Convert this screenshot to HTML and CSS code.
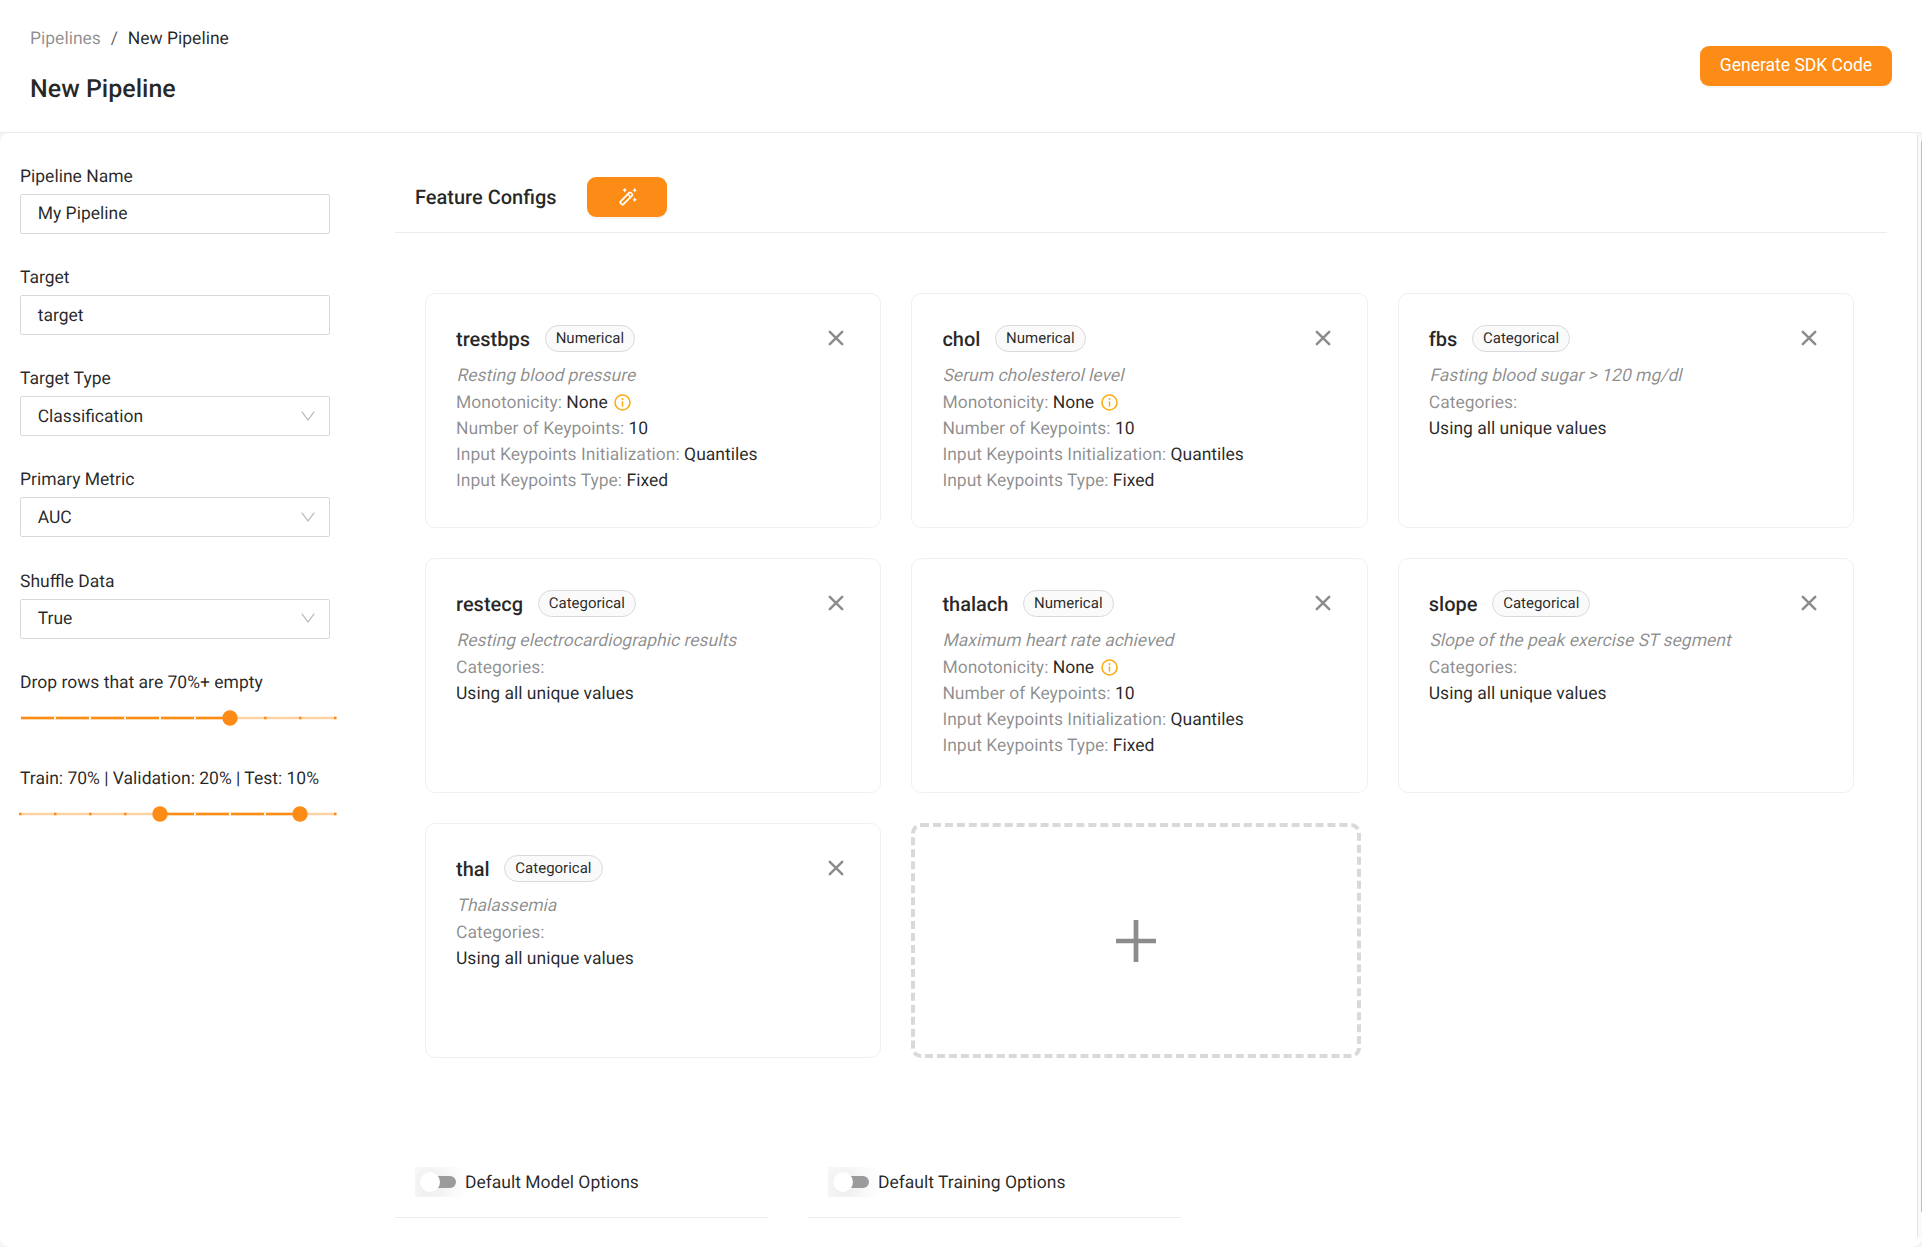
FILE: index.html
```html
<!DOCTYPE html>
<html lang="en">
<head>
<meta charset="utf-8">
<title>New Pipeline</title>
<link rel="stylesheet" href="styles.css">
</head>
<body>
<svg class="defs" width="0" height="0" aria-hidden="true">
  <symbol id="i-close" viewBox="0 0 16 16"><path d="M1.8 1.8 14.200 14.200M14.200 1.800 1.800 14.200" fill="none" stroke="currentColor" stroke-width="2.500" stroke-linecap="round"/></symbol>
  <symbol id="i-down" viewBox="0 0 14 10"><path d="M.7.6 7 9 13.3.6" fill="none" stroke="currentColor" stroke-width="1.300"/></symbol>
  <symbol id="i-info" viewBox="0 0 17 17"><circle cx="8.5" cy="8.5" r="7.500" fill="none" stroke="currentColor" stroke-width="1.600"/><path d="M8.5 7.3v5.4" stroke="currentColor" stroke-width="1.500"/><circle cx="8.5" cy="5.1" r="1" fill="currentColor"/></symbol>
</svg>

<header class="page-header">
  <div>
    <nav class="crumbs"><a class="crumb-link">Pipelines</a><span class="crumb-sep">/</span><span>New Pipeline</span></nav>
    <h1 class="page-title">New Pipeline</h1>
  </div>
  <button class="btn btn-code">Generate SDK Code</button>
</header>

<div class="backdrop">
<div class="body-panel">
  <aside class="sidebar">
    <div class="field"><label class="label">Pipeline Name</label><div class="control">My Pipeline</div></div>
    <div class="field"><label class="label">Target</label><div class="control">target</div></div>
    <div class="field"><label class="label">Target Type</label><div class="control">Classification<svg class="chev"><use href="#i-down"/></svg></div></div>
    <div class="field"><label class="label">Primary Metric</label><div class="control">AUC<svg class="chev"><use href="#i-down"/></svg></div></div>
    <div class="field"><label class="label">Shuffle Data</label><div class="control">True<svg class="chev"><use href="#i-down"/></svg></div></div>
    <div class="range">
      <label class="label">Drop rows that are 70%+ empty</label>
      <svg class="slider" width="320" height="18" viewBox="0 0 320 18">
        <path class="rail" d="M3 9H318.500"/><path class="track" d="M3 9H212"/>
        <path class="gap" d="M36 9h2M71 9h2M106 9h2M141 9h2M176 9h2"/>
        <path class="mark" d="M246 9h2.500M281 9h2.500M316 9h2.500"/>
        <circle class="thumb" cx="212" cy="9" r="7.700"/>
      </svg>
    </div>
    <div class="range">
      <label class="label">Train: 70% | Validation: 20% | Test: 10%</label>
      <svg class="slider" width="320" height="18" viewBox="0 0 320 18">
        <path class="rail" d="M2 9H318.500"/><path class="track" d="M142 9H282"/>
        <path class="gap" d="M176 9h2M211 9h2M246 9h2"/>
        <path class="mark" d="M1 9h2.500M36 9h2.500M71 9h2.500M106 9h2.500M316 9h2.500"/>
        <circle class="thumb" cx="142" cy="9" r="7.700"/><circle class="thumb" cx="282" cy="9" r="7.700"/>
      </svg>
    </div>
  </aside>

  <main class="main">
    <div class="section-head">
      <h2 class="section-title">Feature Configs</h2>
      <button class="btn btn-magic" aria-label="Auto configure">
        <svg width="18" height="18" viewBox="0 0 18 18">
          <rect x="-7" y="-2" width="14.500" height="4" rx="1" transform="translate(7.100 10.700) rotate(-45)" fill="none" stroke="#fff" stroke-width="1.800"/>
          <path d="M9.200 6.600 11.500 8.900" stroke="#fff" stroke-width="1.400"/>
          <path d="M5.700 -.2l.8 1.500 1.500.8-1.500.8-.8 1.500-.8-1.500-1.500-.8 1.500-.8zM15.700 -.2l.8 1.600 1.600.8-1.600.8-.8 1.600-.8-1.600-1.600-.8 1.600-.8zM15.700 9.300l.8 1.600 1.600.8-1.600.8-.8 1.600-.8-1.600-1.600-.8 1.600-.8z" fill="#fff"/>
        </svg>
      </button>
    </div>

    <div class="grid">
      <article class="card">
        <div class="card-head"><h3 class="name">trestbps</h3><span class="tag">Numerical</span><svg class="close"><use href="#i-close"/></svg></div>
        <p class="desc">Resting blood pressure</p>
        <p class="row">Monotonicity: <b>None</b><svg class="info"><use href="#i-info"/></svg></p>
        <p class="row">Number of Keypoints: <b>10</b></p>
        <p class="row">Input Keypoints Initialization: <b>Quantiles</b></p>
        <p class="row">Input Keypoints Type: <b>Fixed</b></p>
      </article>
      <article class="card">
        <div class="card-head"><h3 class="name">chol</h3><span class="tag">Numerical</span><svg class="close"><use href="#i-close"/></svg></div>
        <p class="desc">Serum cholesterol level</p>
        <p class="row">Monotonicity: <b>None</b><svg class="info"><use href="#i-info"/></svg></p>
        <p class="row">Number of Keypoints: <b>10</b></p>
        <p class="row">Input Keypoints Initialization: <b>Quantiles</b></p>
        <p class="row">Input Keypoints Type: <b>Fixed</b></p>
      </article>
      <article class="card">
        <div class="card-head"><h3 class="name">fbs</h3><span class="tag">Categorical</span><svg class="close"><use href="#i-close"/></svg></div>
        <p class="desc">Fasting blood sugar &gt; 120 mg/dl</p>
        <p class="row">Categories:</p>
        <p class="row"><b>Using all unique values</b></p>
      </article>
      <article class="card">
        <div class="card-head"><h3 class="name">restecg</h3><span class="tag">Categorical</span><svg class="close"><use href="#i-close"/></svg></div>
        <p class="desc">Resting electrocardiographic results</p>
        <p class="row">Categories:</p>
        <p class="row"><b>Using all unique values</b></p>
      </article>
      <article class="card">
        <div class="card-head"><h3 class="name">thalach</h3><span class="tag">Numerical</span><svg class="close"><use href="#i-close"/></svg></div>
        <p class="desc">Maximum heart rate achieved</p>
        <p class="row">Monotonicity: <b>None</b><svg class="info"><use href="#i-info"/></svg></p>
        <p class="row">Number of Keypoints: <b>10</b></p>
        <p class="row">Input Keypoints Initialization: <b>Quantiles</b></p>
        <p class="row">Input Keypoints Type: <b>Fixed</b></p>
      </article>
      <article class="card">
        <div class="card-head"><h3 class="name">slope</h3><span class="tag">Categorical</span><svg class="close"><use href="#i-close"/></svg></div>
        <p class="desc">Slope of the peak exercise ST segment</p>
        <p class="row">Categories:</p>
        <p class="row"><b>Using all unique values</b></p>
      </article>
      <article class="card">
        <div class="card-head"><h3 class="name">thal</h3><span class="tag">Categorical</span><svg class="close"><use href="#i-close"/></svg></div>
        <p class="desc">Thalassemia</p>
        <p class="row">Categories:</p>
        <p class="row"><b>Using all unique values</b></p>
      </article>
      <button class="add" aria-label="Add feature">
        <svg width="40" height="42" viewBox="0 0 40 42"><path d="M20 0v42M0 21h40" stroke="#8c8c8c" stroke-width="4.700"/></svg>
      </button>
    </div>

    <div class="options">
      <div class="option"><span class="switch"><span class="knob"></span></span><span class="option-label">Default Model Options</span></div>
      <div class="option"><span class="switch"><span class="knob"></span></span><span class="option-label">Default Training Options</span></div>
    </div>
  </main>
  <div class="scroll"><div class="scroll-thumb"></div></div>
</div>
</div>
</body>
</html>
```

FILE: styles.css
```css
* { box-sizing: border-box; }
body {
  margin: 0;
  height: 1247px;
  overflow: hidden;
  background: #fff;
  color: rgba(0, 0, 0, .85);
  font: 17.5px/26px Roboto, sans-serif;
  text-rendering: geometricPrecision;
}
h1, h2, h3, p { margin: 0; font-weight: 500; }
button { border: 0; font: inherit; }
.defs { display: block; }

.page-header {
  display: flex;
  justify-content: space-between;
  height: 133px;
  padding: 26px 30px 0;
  border-bottom: 1px solid #ececec;
}
.crumbs { display: flex; }
.crumb-link { color: rgba(0, 0, 0, .45); }
.crumb-sep { margin: 0 9.8px; color: rgba(0, 0, 0, .65); }
.page-title { margin-top: 19px; font-size: 25px; line-height: 38px; }

.btn {
  display: flex;
  align-items: center;
  justify-content: center;
  height: 40px;
  padding: 0;
  border-radius: 9px;
  background: #fc8c16;
  color: #fff;
  box-shadow: 0 2px 1px rgba(0, 0, 0, .04);
}
.btn-code { width: 192px; margin-top: 20px; padding-bottom: 2px; }
.btn-magic { width: 80px; padding-left: 1px; }

.backdrop { height: 1114px; background: #f5f5f5; }
.body-panel {
  display: flex;
  height: 1114px;
  border-radius: 10px;
  background: #fff;
  overflow: hidden;
}
.sidebar { width: 395px; padding: 29.6px 0 0 20px; }
.field { height: 101.25px; }
.label { display: block; height: 31px; padding-top: 1px; }
.control {
  display: flex;
  align-items: center;
  justify-content: space-between;
  width: 310px;
  height: 40px;
  padding: 1.8px 14px 0 16.7px;
  border: 1px solid #d9d9d9;
  border-radius: 2px;
}
.chev { width: 14px; height: 10px; margin-bottom: 2px; color: #bfbfbf; }
.range { height: 96px; }
.slider { display: block; margin: 9.2px 0 0 -2px; }
.slider path { fill: none; stroke-width: 2.4; }
.rail { stroke: #fdd2a4; }
.track, .mark { stroke: #fc8c16; }
.slider .gap { stroke: #fff; }
.thumb { fill: #fc8c16; }

.main { width: 1492px; }
.section-head {
  display: flex;
  align-items: center;
  gap: 30px;
  height: 100px;
  padding: 29px 0 0 20px;
  border-bottom: 1px solid #ececec;
}
.section-title { width: 142px; font-size: 20px; line-height: 30px; white-space: nowrap; }
.grid {
  display: grid;
  grid-template-columns: repeat(3, 456.2px);
  grid-auto-rows: 235px;
  gap: 30px 30.2px;
  padding: 60px 0 0 30px;
}
.card {
  padding: 31px 30px 0;
  border: 1px solid #f0f0f0;
  border-radius: 10px;
}
.card-head { display: flex; height: 27px; }
.name { font-size: 20px; line-height: 29px; }
.tag {
  height: 27px;
  margin-left: 14.7px;
  padding: 0 10px;
  border: 1px solid #d9d9d9;
  border-radius: 14px;
  background: #fafafa;
  font-size: 15px;
  line-height: 24px;
}
.close { width: 16px; height: 16px; margin: 4.5px 5.8px 0 auto; color: #8c8c8c; }
.desc {
  width: fit-content;
  height: 27px;
  margin-top: 11px;
  color: rgba(0, 0, 0, .45);
  font-weight: 400;
  transform: skewX(-13deg);
  transform-origin: 0 20px;
}
.row { height: 26px; color: rgba(0, 0, 0, .45); font-weight: 400; }
.row b { margin-left: .4px; color: rgba(0, 0, 0, .85); font-weight: 400; }
.row b:first-child { margin-left: 0; }
.info { width: 17px; height: 17px; margin-left: 6.6px; color: #faad14; vertical-align: -3px; }
.add {
  display: flex;
  align-items: center;
  justify-content: center;
  width: 450px;
  height: 235px;
  padding: 0;
  border: 4px dashed #d9d9d9;
  border-radius: 10px;
  background: none;
}

.options { display: flex; gap: 40px; padding-top: 92px; }
.option {
  display: flex;
  align-items: center;
  width: 373px;
  height: 68px;
  padding: 0 0 4px 20px;
  border-bottom: 1px solid #ececec;
}
.option-label { padding-top: 2px; }
.switch {
  display: flex;
  align-items: center;
  width: 50px;
  height: 30px;
  overflow: hidden;
  background: radial-gradient(circle at 15px 18px, #f1f1f1 10px, #fafafa 25px, #fff 40px);
}
.switch::before {
  content: "";
  width: 31px;
  height: 12px;
  margin-left: 10px;
  border-radius: 6px;
  background: #9b9b9b;
}
.knob {
  width: 20px;
  height: 20px;
  margin-left: -36px;
  border-radius: 50%;
  background: #fff;
}
.scroll {
  flex: 1;
  height: 1104px;
  margin-left: 30px;
  border-left: 1px solid #e4e4e4;
  background: #fafafa;
}
.scroll-thumb {
  width: 1px;
  height: 1072px;
  margin: 7px 0 0 auto;
  background: #bdbdbd;
}
```
